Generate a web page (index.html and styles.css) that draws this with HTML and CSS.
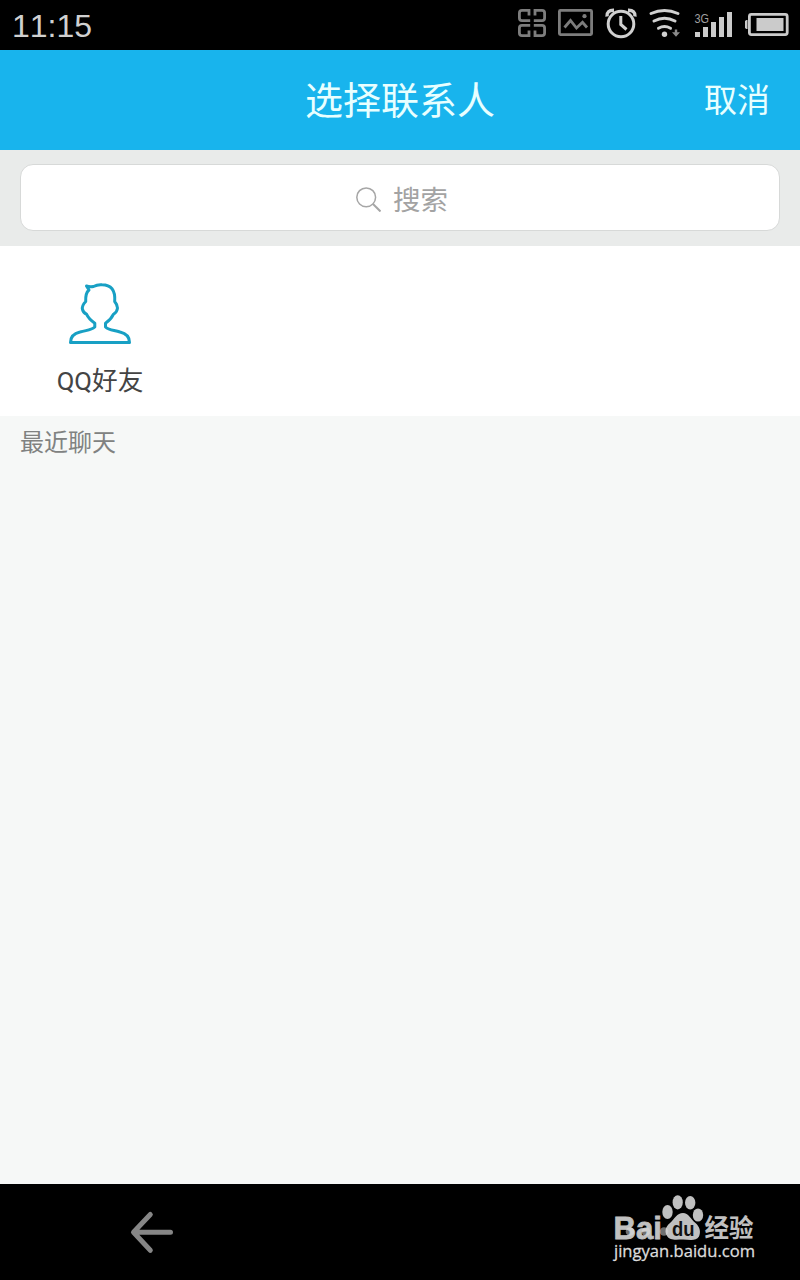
FILE: index.html
```html
<!DOCTYPE html>
<html lang="zh-CN">
<head>
<meta charset="utf-8">
<title>选择联系人</title>
<link rel="stylesheet" href="styles.css">
</head>
<body>
<div class="screen">
  <div class="status">
    <span class="time">11:15</span>
    <div class="status-icons">
      <svg width="30" height="50" viewBox="517 0 30 50" fill="none" stroke="#7d7d7d" stroke-width="2.8">
        <path d="M529 15.5V10.4H522Q519.4 10.4 519.4 13V18Q519.4 20.6 522 20.6H530.2M535 15.5V10.4H542Q544.6 10.4 544.6 13V18Q544.6 20.6 542 20.6H533.8M529 30.5V35.6H522Q519.4 35.6 519.4 33V28Q519.4 25.4 522 25.4H530.2M535 30.5V35.6H542Q544.6 35.6 544.6 33V28Q544.6 25.4 542 25.4H533.8"/>
      </svg>
      <svg width="37" height="50" viewBox="557 0 37 50" fill="none" stroke="#7d7d7d" stroke-width="2.8">
        <rect x="559.4" y="10.4" width="32.2" height="24.2" rx="1"/>
        <path d="M564.5 27.5L570.5 20.5L576.5 28L582.5 22.3L587 27.5"/>
        <circle cx="584.5" cy="16.2" r="2.1" fill="#7d7d7d" stroke="none"/>
      </svg>
      <svg width="34" height="50" viewBox="604 0 34 50" fill="none" stroke="#d0d0d0" stroke-width="3">
        <circle cx="621" cy="24" r="12.8"/>
        <path d="M620.8 16V24.5L626.5 29.5"/>
        <path d="M607 16.5Q606.5 10 614 10.3M635 16.5Q635.5 10 628 10.3" stroke-width="3.4"/>
      </svg>
      <svg width="35" height="50" viewBox="648 0 35 50" fill="none" stroke="#d0d0d0" stroke-width="3" stroke-linecap="round">
        <path d="M651 13.5Q664.5 7.5 678 13.5M654 21Q664.5 15.5 675 21M658.5 28.2Q664.5 25 670.5 28.2"/>
        <circle cx="664.5" cy="34.3" r="2.7" fill="#d0d0d0" stroke="none"/>
        <path d="M674.8 29.5H677.2V32.2H680L676 36.8L672 32.2H674.8Z" fill="#8a8a8a" stroke="none"/>
      </svg>
      <svg width="41" height="50" viewBox="693 0 41 50" fill="#cbcbcb">
        <path d="M695 32h5v5h-5zM703 27h5v10h-5zM711 22h5v15h-5zM719 17h5v20h-5zM727 12h5v25h-5z"/>
        <text class="net" x="694.5" y="22.5" textLength="14.5" lengthAdjust="spacingAndGlyphs">3G</text>
      </svg>
      <svg width="47" height="50" viewBox="743 0 47 50" fill="#cbcbcb">
        <path d="M746.5 20v9h-1.2l-1.3-1v-7l1.3-1z"/>
        <rect x="748.4" y="14.4" width="37.8" height="20.2" rx="2" fill="none" stroke="#cbcbcb" stroke-width="2.8"/>
        <rect x="755.5" y="18" width="27" height="13"/>
      </svg>
    </div>
  </div>

  <header class="header">
    <span class="side"></span>
    <h1 class="title">选择联系人</h1>
    <span class="side cancel">取消</span>
  </header>

  <div class="search-bar">
    <div class="search">
      <svg width="28" height="28" viewBox="353 184 28 28" fill="none" stroke="#a6a6a6">
        <circle cx="366.2" cy="197.3" r="9.4" stroke-width="1.5"/>
        <path d="M373 204L380.5 211.5" stroke-width="2"/>
      </svg>
      <span>搜索</span>
    </div>
  </div>

  <div class="groups">
    <div class="group">
      <svg width="68" height="66" viewBox="66 281 68 66" fill="none" stroke="#18a0c4" stroke-width="3" stroke-linejoin="round">
        <path d="M86.5 286L89 290C86.5 292 85.5 297 85.7 301.5Q81.5 306 82.5 309.5Q83.5 313 86.5 314.2C88.5 318.5 91.5 321 94.8 323.3V327C91 330.5 87 330 80 332C73.5 333.5 70.5 337.5 70.5 342.5H129.5C129.5 337.5 126.5 333.5 120 332C114 330 109 330.5 105.5 327V323.3C109 321 111.5 318.5 113.5 314.2Q117.2 312 117.5 308Q117.5 305 114.7 301.5C115.5 290 111 284.7 102 284.7Q97.5 284.3 93.5 286.5Q89.5 287 86.5 286Z"/>
      </svg>
      <span class="group-name">QQ好友</span>
    </div>
  </div>

  <div class="recent">最近聊天</div>

  <div class="navbar">
    <svg width="46" height="46" viewBox="129 1209 46 46" fill="none" stroke="#868686" stroke-width="5" stroke-linecap="round" stroke-linejoin="round">
      <path d="M150.3 1214.5L133.5 1232.3L150.3 1250.3M134 1232.3H170.5"/>
    </svg>
    <svg class="mark" width="146" height="80" viewBox="612 1190 146 80" fill="#c0c0c0">
      <text class="brand" x="613.5" y="1239" textLength="48.5" lengthAdjust="spacingAndGlyphs">Bai</text>
      <ellipse cx="677.7" cy="1202.3" rx="5.1" ry="7.1"/>
      <ellipse cx="690.2" cy="1202.7" rx="5.2" ry="6.7"/>
      <ellipse cx="667.5" cy="1212" rx="5.2" ry="6.9"/>
      <ellipse cx="698" cy="1215" rx="5.2" ry="6.6"/>
      <path d="M683 1213C677 1213 674.5 1219 670 1223C665 1227 664.5 1232 667 1236C670 1241 677 1239.5 683 1239.5C689 1239.5 696 1241.5 699 1236.5C701 1232 700 1227 695.5 1223C690.5 1219 688.5 1213 683 1213Z"/>
      <g fill="#dedede" opacity=".5"><circle cx="630" cy="1231.5" r="4.3"/><circle cx="646" cy="1231.5" r="4.3"/><circle cx="664" cy="1231.5" r="4.3"/></g>
      <text class="du" x="672" y="1235.5" textLength="22.5" lengthAdjust="spacingAndGlyphs">du</text>
      <text class="jingyan" x="704.5" y="1237" textLength="49" lengthAdjust="spacingAndGlyphs">经验</text>
      <text class="url" x="614" y="1257.3" textLength="141" lengthAdjust="spacingAndGlyphs">jingyan.baidu.com</text>
    </svg>
  </div>
</div>
</body>
</html>
```

FILE: styles.css
```css
body {
  margin: 0;
  font-family: "Noto Sans CJK SC", sans-serif;
}

.screen {
  display: flex;
  flex-direction: column;
  width: 800px;
  height: 1280px;
  overflow: hidden;
  background: #f6f8f7;
}

.screen svg {
  display: block;
}

.status {
  display: flex;
  justify-content: space-between;
  align-items: center;
  height: 50px;
  padding: 0 9px 0 12px;
  background: #000;
}

.time {
  padding-top: 2px;
  font: 32px/48px "Liberation Sans", sans-serif;
  font-kerning: none;
  color: #d0d0d0;
}

.status-icons {
  display: flex;
  gap: 10px;
}

.net {
  font: 13px "Liberation Sans", sans-serif;
  fill: #a0a0a0;
}

.header {
  display: flex;
  align-items: center;
  box-sizing: border-box;
  height: 100px;
  padding: 0 30px;
  background: #18b4ed;
  color: #e8ffff;
}

.side {
  flex: 1;
}

.title {
  margin: 0;
  font-size: 38px;
  font-weight: 400;
  line-height: 96px;
  padding-bottom: 4px;
}

.cancel {
  font-size: 33px;
  line-height: 96px;
  padding-bottom: 4px;
  text-align: right;
}

.search-bar {
  box-sizing: border-box;
  height: 96px;
  padding: 14px 20px 15px;
  background: #e9ebea;
}

.search {
  display: flex;
  justify-content: center;
  align-items: center;
  gap: 12px;
  box-sizing: border-box;
  height: 67px;
  padding: 1px 0 0 1px;
  border: 1px solid #d7d9d8;
  border-radius: 13px;
  background: #fff;
  font-size: 27.5px;
  line-height: 65px;
  color: #a3a3a3;
}

.groups {
  display: flex;
  height: 170px;
  background: #fff;
}

.group {
  display: flex;
  flex-direction: column;
  align-items: center;
  gap: 15px;
  width: 200px;
  padding-top: 35px;
}

.group-name {
  font-family: Roboto, "Noto Sans CJK SC", sans-serif;
  font-size: 25.7px;
  line-height: 38px;
  color: #444;
}

.recent {
  flex: 1;
  padding: 7px 20px;
  font-size: 24px;
  line-height: 36px;
  color: #808281;
}

.navbar {
  display: flex;
  justify-content: space-between;
  align-items: center;
  height: 96px;
  padding: 0 42px 0 129px;
  background: #000;
}

.mark {
  margin-bottom: 4px;
  overflow: visible;
}

.brand {
  font: bold 32px "Liberation Sans", sans-serif;
  stroke: #c0c0c0;
  stroke-width: 0.8px;
}

.du {
  font: bold 21px "Liberation Sans", sans-serif;
  fill: #111;
}

.jingyan {
  font: bold 25px "Noto Sans CJK SC", sans-serif;
}

.url {
  font: 17px "Open Sans", sans-serif;
  fill: #dcdcdc;
  stroke: #dcdcdc;
  stroke-width: 0.3px;
}
```
